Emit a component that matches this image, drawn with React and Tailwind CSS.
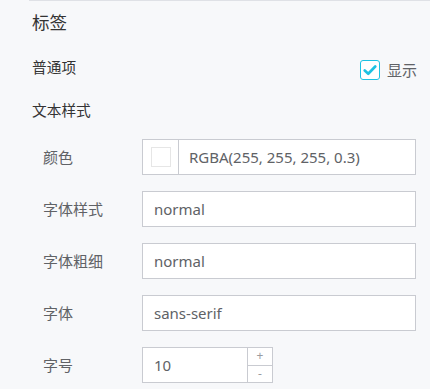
import React from 'react';

const FONT = "font-['Noto_Sans','Noto_Sans_CJK_SC',sans-serif]";

const FieldRow = ({ label, children }) => (
    <div className="flex items-center h-[36px]">
        <span className="w-[110px] shrink-0 pl-[11px] text-[15px] text-[#606266]">{label}</span>
        {children}
    </div>
);

const TextBox = ({ value }) => (
    <div className="w-[274px] h-[36px] bg-white border border-[#c9cbd1] flex items-center px-[11px] text-[15px] text-[#606266]">
        {value}
    </div>
);

export default function App() {
    return (
        <div className={`w-[430px] h-[389px] bg-[#f7f8fa] overflow-hidden ${FONT}`}>
            <div className="ml-[29px] h-[1px] bg-[#dfe1e6]"></div>
            <div className="pl-[32px] pr-[13px]">
                <h2 className="mt-[9px] leading-[24px] text-[17.5px] text-[#333]">标签</h2>

                <div className="mt-[23px] flex justify-between items-start h-[23px]">
                    <span className="leading-[20px] text-[14.7px] text-[#333]">普通项</span>
                    <label className="flex items-center mt-[3px] gap-[7px]">
                        <span className="w-[20px] h-[20px] rounded-[3px] border border-[#1cc2e3] bg-white flex items-center justify-center">
                            <svg viewBox="0 0 16 16" className="w-[14px] h-[14px]">
                                <path d="M2 8.5 L6 12.3 L14 4" fill="none" stroke="#1cc2e3" strokeWidth="3" strokeLinecap="round" strokeLinejoin="round" />
                            </svg>
                        </span>
                        <span className="text-[15px] leading-[20px] text-[#606266]">显示</span>
                    </label>
                </div>

                <div className="mt-[20px] leading-[20px] text-[14.7px] text-[#333]">文本样式</div>
            </div>

            <div className="mt-[19px] ml-[32px] flex flex-col gap-[16px]">
                <FieldRow label="颜色">
                    <div className="w-[274px] h-[36px] bg-white border border-[#c9cbd1] flex items-stretch">
                        <div className="w-[36px] border-r border-[#c9cbd1] flex items-center justify-center">
                            <span className="w-[20px] h-[20px] border border-[#e6e6e6] bg-white"></span>
                        </div>
                        <div className="pl-[10px] flex items-center">
                            <span className="w-[174px] overflow-hidden whitespace-nowrap text-[15px] text-[#606266]">RGBA(255, 255, 255, 0.3)</span>
                        </div>
                    </div>
                </FieldRow>
                <FieldRow label="字体样式"><TextBox value="normal" /></FieldRow>
                <FieldRow label="字体粗细"><TextBox value="normal" /></FieldRow>
                <FieldRow label="字体"><TextBox value="sans-serif" /></FieldRow>
                <FieldRow label="字号">
                    <div className="w-[131px] h-[36px] bg-white border border-[#c9cbd1] flex">
                        <div className="flex-1 flex items-center px-[11px] text-[15px] text-[#606266]">10</div>
                        <div className="w-[25px] border-l border-[#c9cbd1] flex flex-col">
                            <span className="flex-1 flex items-center justify-center text-[12px] leading-none text-[#9a9ca1] border-b border-[#c9cbd1]">+</span>
                            <span className="flex-1 flex items-center justify-center text-[12px] leading-none text-[#9a9ca1]">-</span>
                        </div>
                    </div>
                </FieldRow>
            </div>
        </div>
    );
}
